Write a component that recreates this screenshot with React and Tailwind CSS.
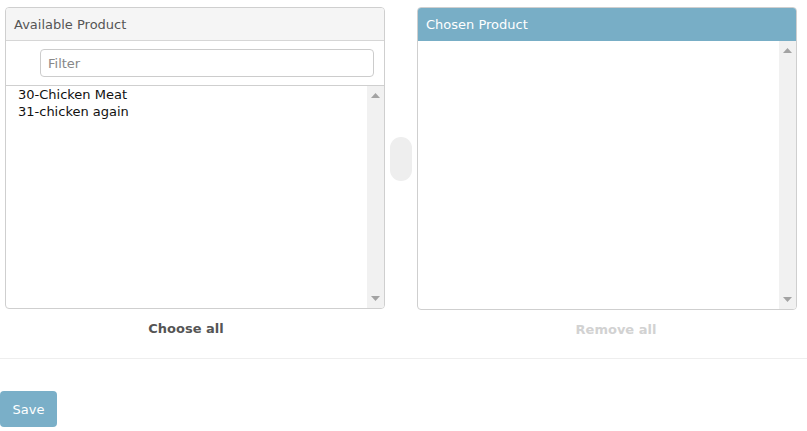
import React from "react";

const font = { fontFamily: '"DejaVu Sans", Verdana, sans-serif' };

function ScrollBar() {
  return (
    <div className="flex w-[17px] shrink-0 flex-col items-center justify-between bg-[#f1f1f1] py-[7px]">
      <svg width="9" height="5" viewBox="0 0 9 5"><path d="M0 5 L4.5 0 L9 5 Z" fill="#a3a3a3" /></svg>
      <svg width="9" height="5" viewBox="0 0 9 5"><path d="M0 0 L4.5 5 L9 0 Z" fill="#a3a3a3" /></svg>
    </div>
  );
}

export default function App() {
  return (
    <div className="h-[431px] w-[807px] bg-white text-[13px]" style={font}>
      <div className="flex pl-[5px] pt-[7px]">
        {/* Left panel */}
        <div className="flex w-[380px] flex-col">
          <div className="flex h-[302px] flex-col overflow-hidden rounded-[4px] border border-[#cfcfcf]">
            <div className="flex h-[33px] items-center border-b border-[#d6d6d6] bg-[#f5f5f5] pl-[8px] pt-[1px] text-[#555]">
              Available Product
            </div>
            <div className="flex h-[44px] items-start justify-end pr-[10px] pt-[8px]">
              <div className="flex h-[28px] w-[334px] items-center rounded-[4px] border border-[#cccccc] pl-[7px] pt-[1px] text-[#888]">
                Filter
              </div>
            </div>
            <div className="flex flex-1 border-t border-[#cfcfcf]">
              <div className="flex-1 pl-[12px] leading-[17px] text-[#111]">
                <div>30-Chicken Meat</div>
                <div>31-chicken again</div>
              </div>
              <ScrollBar />
            </div>
          </div>
          <div className="mt-[10px] pr-[18px] text-center font-bold leading-[20px] text-[#555]">Choose all</div>
        </div>

        {/* Middle */}
        <div className="flex w-[32px] justify-center pt-[130px]">
          <div className="h-[44px] w-[22px] rounded-full bg-[#eeeeee]" />
        </div>

        {/* Right panel */}
        <div className="flex w-[380px] flex-col">
          <div className="flex h-[303px] flex-col overflow-hidden rounded-[4px] border border-[#cfcfcf]">
            <div className="flex h-[33px] items-center bg-[#78aec6] pl-[8px] text-white">Chosen Product</div>
            <div className="flex flex-1">
              <div className="flex-1" />
              <ScrollBar />
            </div>
          </div>
          <div className="mt-[10px] pl-[18px] text-center font-bold leading-[20px] text-[#d2d2d2]">Remove all</div>
        </div>
      </div>

      <div className="mt-[18px] border-t border-[#eeeeee]" />

      <div className="pt-[32px]">
        <button className="flex h-[36px] w-[57px] items-center justify-center rounded-[4px] bg-[#7aafc8] pt-[1px] text-white">
          Save
        </button>
      </div>
    </div>
  );
}
